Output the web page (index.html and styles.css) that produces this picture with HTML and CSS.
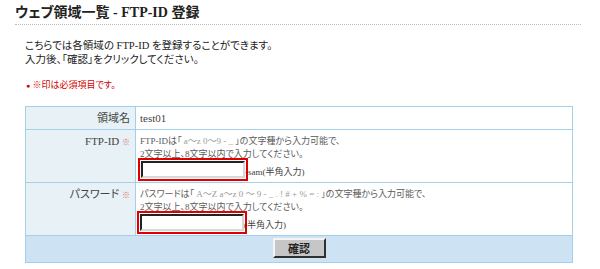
FILE: index.html
```html
<!DOCTYPE html>
<html lang="ja">
<head>
<meta charset="utf-8">
<title>ウェブ領域一覧 - FTP-ID 登録</title>
<link rel="stylesheet" href="styles.css">
</head>
<body>
<div class="page">
  <h1 class="title">ウェブ領域一覧 - FTP-ID 登録</h1>
  <div class="content">
    <p class="intro">こちらでは各領域の FTP-ID を登録することができます。<br>入力後、「確認」をクリックしてください。</p>
    <p class="note"><span class="dot">●</span> ※印は必須項目です。</p>
    <table class="form">
      <tr class="row-name">
        <th class="label">領域名</th>
        <td class="value plain">test01</td>
      </tr>
      <tr>
        <th class="label">FTP-ID <span class="req">※</span></th>
        <td class="value">
          <div class="hint">FTP-IDは「 <span class="chars">a～z 0～9 - _</span> 」の文字種から入力可能で、<br>2文字以上、8文字以内で入力してください。</div>
          <div class="field"><input class="box box-id" type="text"><span class="suffix">-sam(半角入力)</span></div>
        </td>
      </tr>
      <tr>
        <th class="label">パスワード <span class="req">※</span></th>
        <td class="value">
          <div class="hint">パスワードは「 <span class="chars">A～Z a～z 0 ～ 9 - _ . ! # + % = :</span> 」の文字種から入力可能で、<br>2文字以上、8文字以内で入力してください。</div>
          <div class="field"><input class="box box-pw" type="password"><span class="suffix">(半角入力)</span></div>
        </td>
      </tr>
      <tr class="actions">
        <td colspan="2"><button class="btn" type="button">確認</button></td>
      </tr>
    </table>
  </div>
</div>
</body>
</html>
```

FILE: styles.css
```css
html, body {
  margin: 0;
  padding: 0;
  background: #ffffff;
}

body {
  font-family: "Liberation Serif", "Noto Sans CJK JP", serif;
  font-feature-settings: "palt";
  color: #333333;
}

.page {
  padding: 5px 19px 0 15px;
}

.title {
  margin: 0;
  font-size: 14px;
  line-height: 16px;
  font-weight: bold;
  color: #222222;
  padding-bottom: 3px;
  border-bottom: 1px dotted #bdbdbd;
}

.content {
  padding-left: 10px;
  width: 548px;
}

.intro {
  margin: 14px 0 0;
  font-size: 10.5px;
  line-height: 14px;
  color: #222222;
}

.note {
  margin: 12px 0 0;
  font-size: 9px;
  line-height: 12px;
  color: #d40000;
}

.dot {
  font-size: 7px;
  margin-left: 1px;
}

.form {
  margin-top: 14px;
  width: 548px;
  border-collapse: collapse;
  border: 1px solid #a3cfe9;
}

.form th,
.form td {
  border: 1px solid #a3cfe9;
  vertical-align: top;
}

.label {
  width: 104px;
  background: #e7f1f6;
  text-align: right;
  font-weight: normal;
  font-size: 11px;
  line-height: 12px;
  padding: 5px 5px 5px 0;
  color: #444444;
}

.req {
  font-size: 8px;
  color: #e06a6a;
}

.value {
  background: #ffffff;
  padding: 5px 4px 4px 4px;
  font-size: 9px;
}

.value.plain {
  font-size: 11px;
  line-height: 12px;
  padding-bottom: 5px;
  color: #444444;
}

.hint {
  line-height: 13px;
  color: #5a5a5a;
  white-space: nowrap;
}

.chars {
  color: #9a9a9a;
}

.field {
  display: flex;
  align-items: flex-end;
  height: 17px;
}

.box {
  box-sizing: border-box;
  width: 104px;
  height: 17px;
  margin: 0;
  padding: 0 2px;
  border: 2px solid;
  border-color: #222222 #d8d8d8 #d8d8d8 #222222;
  background: #ffffff;
  outline: 2px solid #e00000;
  outline-offset: 1px;
  font-size: 9px;
}

.box-id {
  margin-left: 1px;
}

.suffix {
  line-height: 12px;
  color: #444444;
}

.actions td {
  background: #cde2f3;
  text-align: center;
  padding: 2px 0 4px;
}

.btn {
  box-sizing: border-box;
  width: 53px;
  height: 20px;
  margin: 0;
  padding: 0;
  background: #c6c6c6;
  border: 2px solid;
  border-color: #f4f4f4 #303030 #303030 #f4f4f4;
  font-family: "Noto Sans CJK JP", sans-serif;
  font-size: 11px;
  font-weight: bold;
  color: #222222;
  line-height: 14px;
}
```
